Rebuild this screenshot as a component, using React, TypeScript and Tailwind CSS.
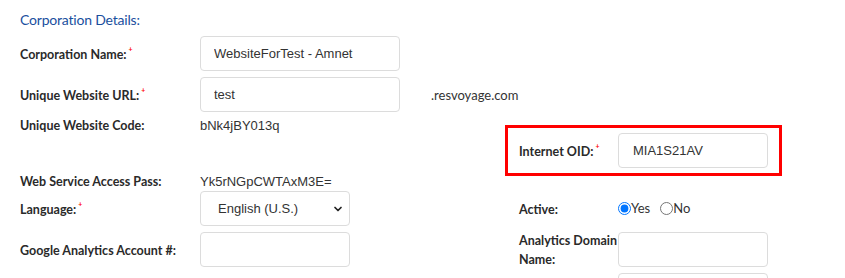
import { ChevronDown } from "lucide-react";

const label = "font-['Lato',sans-serif] text-[12.5px] font-bold text-[#2a2a2a]";
const field =
  "h-[35px] rounded-[4px] border border-[#dcdcdc] bg-white font-['Liberation_Sans',Arial,sans-serif] text-[13px] text-[#333] outline-none";

function Req() {
  return <span className="relative -top-[7px] ml-[2px] text-[7px] font-bold leading-none text-[#f00]">+</span>;
}

function Label({ text, req, width }: { text: string; req?: boolean; width: string }) {
  return (
    <div className={`${width} shrink-0 pt-[3px] ${label}`}>
      {text}
      {req && <Req />}
    </div>
  );
}

export default function App() {
  return (
    <div className="h-[278px] w-[845px] overflow-hidden bg-white pl-[20px] pt-[10px] font-['Lato',sans-serif]">
      <h2 className="text-[14px] leading-[20px] tracking-[-0.2px] text-[#1a4f9e]">Corporation Details:</h2>

      <div className="mt-[6px] flex h-[35px] items-center">
        <Label text="Corporation Name:" req width="w-[180px]" />
        <input className={`${field} w-[200px] pl-[13px]`} defaultValue="WebsiteForTest - Amnet" />
      </div>

      <div className="mt-[6px] flex h-[35px] items-center">
        <Label text="Unique Website URL:" req width="w-[180px]" />
        <input className={`${field} w-[200px] pl-[13px]`} defaultValue="test" />
        <span className="ml-[31px] pt-[3px] text-[13px] text-[#333]">.resvoyage.com</span>
      </div>

      <div className="flex h-[60px] items-start">
        <div className="flex w-[485px] shrink-0 pt-[4px] leading-[20px]">
          <div className={`w-[180px] shrink-0 ${label}`}>Unique Website Code:</div>
          <span className="font-['Liberation_Sans',Arial,sans-serif] text-[13px] text-[#333]">bNk4jBY013q</span>
        </div>
        <div className="mt-[13px] flex w-[277px] items-center border-[3px] border-[#f00] py-[5px] pl-[11px]">
          <Label text="Internet OID:" req width="w-[99px]" />
          <input className={`${field} w-[150px] pl-[14px]`} defaultValue="MIA1S21AV" />
        </div>
      </div>

      <div className="flex h-[19px] items-center leading-[19px]">
        <div className={`w-[180px] shrink-0 ${label}`}>Web Service Access Pass:</div>
        <span className="font-['Liberation_Sans',Arial,sans-serif] text-[13px] text-[#333]">Yk5rNGpCWTAxM3E=</span>
      </div>

      <div className="flex h-[35px] items-center">
        <div className="flex w-[485px] shrink-0 items-center">
          <Label text="Language:" req width="w-[180px]" />
          <div className={`${field} relative flex w-[150px] items-center pl-[17px]`}>
            English (U.S.)
            <ChevronDown className="absolute right-[5px] top-[11px]" size={12} strokeWidth={3.5} color="#222" />
          </div>
        </div>
        <div className="flex items-center pl-[14px]">
          <Label text="Active:" width="w-[99px]" />
          <label className="flex items-center text-[13px] text-[#333]">
            <input type="radio" name="active" defaultChecked className="m-0 size-[13px] accent-[#0075ff]" />
            Yes
          </label>
          <label className="ml-[10px] flex items-center text-[13px] text-[#333]">
            <input type="radio" name="active" className="m-0 size-[13px]" />
            No
          </label>
        </div>
      </div>

      <div className="mt-[6px] flex h-[35px] items-center">
        <div className="flex w-[485px] shrink-0 items-center">
          <Label text="Google Analytics Account #:" width="w-[180px]" />
          <input className={`${field} w-[150px]`} />
        </div>
        <div className="flex items-center pl-[14px]">
          <div className={`w-[99px] shrink-0 leading-[19px] ${label}`}>Analytics Domain Name:</div>
          <input className={`${field} w-[150px]`} />
        </div>
      </div>

      <div className="mt-[6px] flex h-[35px] items-center">
        <div className="w-[485px] shrink-0" />
        <div className="flex items-center pl-[14px]">
          <div className="w-[99px] shrink-0" />
          <input className={`${field} w-[150px]`} />
        </div>
      </div>
    </div>
  );
}
